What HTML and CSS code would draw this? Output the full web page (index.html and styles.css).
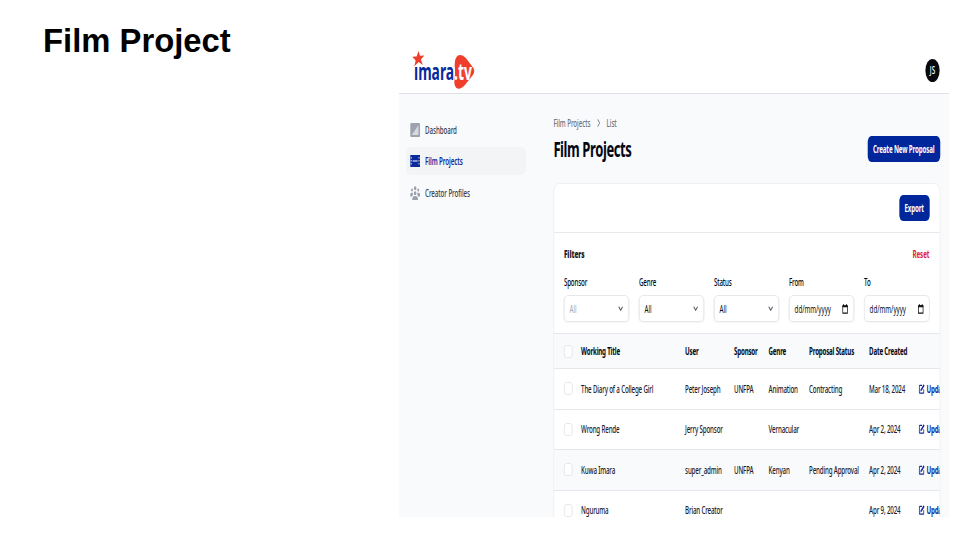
FILE: index.html
```html
<!DOCTYPE html>
<html lang="en">
<head>
<meta charset="utf-8">
<title>Film Project</title>
<link rel="stylesheet" href="styles.css">
</head>
<body>
<svg width="0" height="0" class="defs" aria-hidden="true">
  <symbol id="edit" viewBox="0 0 16 16"><path d="M9 2H3.500A1.500 1.500 0 0 0 2 3.500V13a1.500 1.500 0 0 0 1.500 1.500H12a1.500 1.500 0 0 0 1.500-1.500V8.500" fill="none" stroke="currentColor" stroke-width="2"/><path d="M13 .5l2.500 2.300-7.300 7.700-3.700 1.500 1.200-3.700z" fill="currentColor"/></symbol>
  <symbol id="chev" viewBox="0 0 10 10"><path d="M1.500 3L5 7l3.500-4" fill="none" stroke="currentColor" stroke-width="1.500"/></symbol>
  <symbol id="cal" viewBox="0 0 12 12"><path d="M1.500 2.500h9v8.500h-9z" fill="none" stroke="currentColor" stroke-width="1.400"/><path d="M1 1.500h10v2.500H1zM2.500 0h1.500V2H2.500zM8 0h1.500V2H8z" fill="currentColor"/></symbol>
</svg>
<div class="slide">
<h1 class="slide-title">Film Project</h1>
<div class="app">
  <header class="topbar">
    <svg class="logo" viewBox="0 0 64 40" preserveAspectRatio="none">
      <path d="M45 5.500Q49 2 54 7L61.500 17q2 3.500-.5 7L53 34q-5 5.500-8.500 3-2.500-2.500-2-8 1-6 .5-11Q42 8.500 45 5.500z" fill="#f03e2d"/>
      <path d="M6.500 0L8 4.800l4.300-.3-3.400 4 2 5.500-4.400-2.900L2.300 15.500l1.300-6L.2 5.700l4.400-.3z" fill="#f03e2d"/>
      <text x="2" y="29" class="logo-a" textLength="58" lengthAdjust="spacingAndGlyphs">ımara<tspan class="logo-b">.tv</tspan></text>
    </svg>
    <div class="avatar">JS</div>
  </header>
  <div class="body">
    <nav class="side">
      <a class="item"><svg class="ico" viewBox="0 0 16 14" preserveAspectRatio="none"><rect width="16" height="14" rx="1.500" fill="#9da3ae"/><path d="M2.500 12L13.500 2v10z" fill="#d5d8dd"/></svg><span>Dashboard</span></a>
      <a class="item active"><svg class="ico" viewBox="0 0 16 14" preserveAspectRatio="none"><path d="M0 1h16v12H0z" fill="#0a2a9c"/><path d="M4 6.500h8v1H4z" fill="#fff"/><path d="M1 3h1.500v1.500H1zM1 6h1.500v1.500H1zM1 9h1.500v1.500H1zM13.500 3H15v1.500h-1.500zM13.500 6H15v1.500h-1.500zM13.500 9H15v1.500h-1.500z" fill="#dce2f4"/></svg><span>Film Projects</span></a>
      <a class="item"><svg class="ico" viewBox="0 0 16 14" preserveAspectRatio="none" fill="#9aa0ac"><circle cx="8" cy="2.200" r="2"/><circle cx="3" cy="4" r="1.500"/><circle cx="13" cy="4" r="1.500"/><circle cx="8" cy="7.300" r="2"/><path d="M3.500 14v-2q.5-2 4.500-2t4.500 2v2zM0 10.500V8q.5-1.500 4-1.500L4.500 9 3 10.500zM16 10.500V8q-.5-1.500-4-1.500L11.500 9l1.500 1.500z"/></svg><span>Creator Profiles</span></a>
    </nav>
    <main class="main">
      <div class="crumbs"><span>Film Projects</span><svg viewBox="0 0 10 10"><path d="M3 .5L7 5 3 9.500" fill="none" stroke="currentColor" stroke-width="1.300"/></svg><span>List</span></div>
      <div class="head"><h2>Film Projects</h2><button class="btn create">Create New Proposal</button></div>
      <section class="card">
        <div class="tools"><button class="btn export">Export</button></div>
        <div class="filters">
          <div class="fhead"><b>Filters</b><a>Reset</a></div>
          <div class="fields">
            <label>Sponsor<span class="field dim">All<svg><use href="#chev"/></svg></span></label>
            <label>Genre<span class="field">All<svg><use href="#chev"/></svg></span></label>
            <label>Status<span class="field">All<svg><use href="#chev"/></svg></span></label>
            <label>From<span class="field date">dd/mm/yyyy<svg><use href="#cal"/></svg></span></label>
            <label>To<span class="field date">dd/mm/yyyy<svg><use href="#cal"/></svg></span></label>
          </div>
        </div>
        <div class="row thead"><i class="box"></i><span>Working Title</span><span>User</span><span>Sponsor</span><span>Genre</span><span>Proposal Status</span><span>Date Created</span><span></span></div>
        <div class="row"><i class="box"></i><span>The Diary of a College Girl</span><span>Peter Joseph</span><span>UNFPA</span><span>Animation</span><span>Contracting</span><span>Mar 18, 2024</span><a><svg><use href="#edit"/></svg>Update</a></div>
        <div class="row"><i class="box"></i><span>Wrong Rende</span><span>Jerry Sponsor</span><span></span><span>Vernacular</span><span></span><span>Apr 2, 2024</span><a><svg><use href="#edit"/></svg>Update</a></div>
        <div class="row striped"><i class="box"></i><span>Kuwa Imara</span><span>super_admin</span><span>UNFPA</span><span>Kenyan</span><span>Pending Approval</span><span>Apr 2, 2024</span><a><svg><use href="#edit"/></svg>Update</a></div>
        <div class="row"><i class="box"></i><span>Nguruma</span><span>Brian Creator</span><span></span><span></span><span></span><span>Apr 9, 2024</span><a><svg><use href="#edit"/></svg>Update</a></div>
      </section>
    </main>
  </div>
</div>
</div>
</body>
</html>
```
FILE: styles.css
```css
* { box-sizing: border-box; }
body { margin: 0; background: #fff; }
.defs { display: none; }
.slide { display: flex; width: 960px; height: 540px; overflow: hidden; }
.slide-title { margin: 21px 0 0 43px; width: 356px; flex: none; font: bold 32.800px/40px "Liberation Sans", Arial, sans-serif; letter-spacing: 0; color: #000; }

/* The product capture is squeezed horizontally on the slide. */
.app { flex: none; width: 887px; height: 472px; margin-top: 45px; overflow: hidden; transform: scaleX(.62); transform-origin: 0 0; background: #f9fafb; font: 500 10px/14px "Noto Sans", "Open Sans", sans-serif; letter-spacing: -.27px; color: #1b202b; display: flex; flex-direction: column; }
.topbar { height: 49px; flex: none; background: #fff; border-bottom: 1px solid #dfe1e4; display: flex; justify-content: space-between; align-items: flex-start; padding: 6px 15px 0 21px; }
.logo { width: 103px; height: 40px; }
.logo text { font: 700 24px "Noto Sans", sans-serif; letter-spacing: 0; }
.logo-a { fill: #0a2a9c; }
.logo-b { fill: #fff; }
.avatar { width: 23px; height: 23px; margin-top: 8px; border-radius: 50%; background: #07090f; color: #fff; text-align: center; line-height: 23px; font-size: 10px; letter-spacing: .4px; }
.body { display: flex; flex: 1; }
.side { width: 249px; flex: none; padding: 22px 0 0 11px; display: flex; flex-direction: column; gap: 3px; }
.item { display: flex; align-items: center; width: 194px; height: 28.500px; padding-left: 7px; gap: 8px; border-radius: 7px; font-weight: 500; color: #374151; letter-spacing: -.12px; }
.item.active { background: #f3f4f6; color: #0a2a9c; font-weight: 600; margin-top: -1px; margin-bottom: 1px; }
.ico { width: 16px; height: 14px; }
.main { width: 623.500px; flex: none; padding-top: 22px; }
.crumbs { display: flex; align-items: center; height: 14px; font-weight: 500; color: #6b7280; letter-spacing: -.1px; }
.crumbs svg { width: 10px; height: 8px; margin: 0 8px; }
.head { display: flex; justify-content: space-between; align-items: flex-start; height: 53px; padding-top: 5.500px; }
h2 { margin: 0; font: 700 21px/27px "Noto Sans", sans-serif; letter-spacing: -.65px; color: #030712; }
.btn { border: 0; padding: 0; height: 26px; border-radius: 6px; background: #00269b; color: #fff; font: 700 10px/26px "Noto Sans", sans-serif; letter-spacing: -.25px; white-space: nowrap; }
.create { width: 117px; }
.export { width: 49px; }
.card { height: 360px; border: 1px solid #eceef0; border-radius: 9px; background: #fff; overflow: hidden; }
.tools { height: 49px; border-bottom: 1px solid #e7e9ec; display: flex; justify-content: flex-end; padding: 11px 16px 0 0; }
.filters { height: 100px; padding: 14px 16px 0; }
.fhead { display: flex; justify-content: space-between; height: 14px; font-weight: 700; letter-spacing: -.1px; }
.fhead b { font-size: 10.500px; }
.fhead a { color: #e11d48; }
.fields { display: grid; grid-template-columns: repeat(5, 1fr); gap: 15.600px; margin-top: 14px; font-weight: 500; }
.fields label { display: block; color: #030712; }
.field { display: flex; align-items: center; justify-content: space-between; height: 27px; margin-top: 6px; padding: 0 8px; border: 1px solid #e1e3e7; border-radius: 6px; font-weight: 400; letter-spacing: -.02px; box-shadow: 0 1px 1px #0000000a; }
.field svg { width: 9px; height: 9px; color: #555b66; }
.field.dim { color: #a5a9b1; }
.date svg { width: 11px; height: 10px; color: #111; }
.row { display: grid; grid-template-columns: 28.200px 167.700px 79px 55.700px 65.300px 96.800px 79.200px 50px; align-items: center; width: 700px; height: 40.500px; padding-left: 15.500px; border-top: 1px solid #e5e7eb; white-space: nowrap; }
.thead { height: 35px; background: #f9fafb; font-weight: 700; color: #030712; letter-spacing: -.33px; }
.striped { background: #f9fafb; }
.box { width: 14px; height: 13px; border: 1px solid #dfe2e6; border-radius: 4px; background: #fff; }
.row a { display: flex; align-items: center; gap: 1.500px; color: #0a2a9c; font-weight: 700; letter-spacing: -.4px; }
.row a svg { width: 12px; height: 10px; }
```
